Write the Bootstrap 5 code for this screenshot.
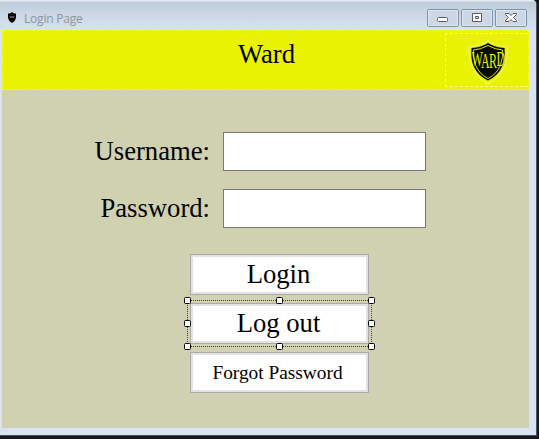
<!DOCTYPE html>
<html lang="en">
<head>
<meta charset="utf-8">
<title>Login Page</title>
<link href="https://cdn.jsdelivr.net/npm/bootstrap@5.3.0/dist/css/bootstrap.min.css" rel="stylesheet">
<style>
body{background:#17171f;overflow:hidden;font-family:"Liberation Serif","Times New Roman",serif;color:#000}
.app-window{width:537px;height:436px;background:#d8e4f1;border-top-right-radius:5px;border-right:1px solid #4b5562;border-bottom:1px solid #4b5562;padding:0 7px 7px 2px}
.title-bar{height:30px;margin:0 -7px 0 -2px;padding:0 9px 0 7px;background:linear-gradient(#e4ecf4 0,#e4ecf4 1px,#bfcddb 2px,#c8d5e3 12px,#d6e2ef 30px);border-top-right-radius:4px}
.title-text{font:12px/14px "Open Sans","Noto Sans",sans-serif;letter-spacing:-.2px;color:#8e969f;margin:7px 0 0 7px}
.win-controls{margin-top:9px}
.client{height:398px;background:#d0d1b1}
.banner{height:60px;background:#e9f200;border:1px dashed #f0f540}
.banner-title{font-size:26.67px;line-height:30px;margin:8px 0 0 235px}
.logo-box{width:83px;height:54px;margin:2px 0 0 auto;border:1px dashed #f6f98c;border-right:0}
.field-row{height:39px;gap:13px}
.field-row label{width:208px;font-size:26.67px;line-height:39px}
.field-row .form-control{width:203px;height:39px;border:1px solid #777870;padding:0 6px}
.login-form{padding-top:42px}
.field-list{gap:18px}
.action-list{margin:26px 0 0 188px}
.action{width:179px;height:41px;border:1px solid #aaa;box-shadow:inset 0 0 0 2px #e2e2e2;font-size:26.67px;line-height:39px;background:#fff}
.action-text{display:inline-block;margin-left:-2px}
.action-small{font-size:19.35px}
.action-small .action-text{margin-left:-4px}
.selection{left:-4px;top:-5px;overflow:visible}
</style>
<script src="https://cdn.jsdelivr.net/npm/bootstrap@5.3.0/dist/js/bootstrap.bundle.min.js"></script>
</head>
<body>
<div class="app-window">
  <div class="title-bar d-flex align-items-start">
    <svg class="mt-2 pt-1" width="10" height="18" viewBox="0 0 10 14"><path d="M5 0Q7 2 9 1.500V6Q8.500 9 5 11Q1.500 9 1 6V1.500Q3 2 5 0Z" fill="#080808"/><path d="M3 4l1 2 1-2 1 2 1-2" stroke="#92979b" stroke-width=".6" fill="none"/></svg>
    <div class="title-text align-self-center">Login Page</div>
    <div class="win-controls d-flex ms-auto">
      <svg width="100" height="18" viewBox="0 0 100 18">
        <g fill="#ccd7e3" stroke="#8292ac"><rect x=".5" y=".5" width="31" height="17" rx="1.500"/><rect x="34.500" y=".5" width="31" height="17" rx="1.500"/><rect x="68.500" y=".5" width="31" height="17" rx="1.500"/></g>
        <g fill="none" stroke="#dde6ef"><path d="M1.500 16.500V1.500H30.500V16.500ZM35.500 16.500V1.500H64.500V16.500ZM69.500 16.500V1.500H98.500V16.500Z"/></g>
        <rect x="10.500" y="8.500" width="10" height="4" rx="1" fill="#fff" stroke="#565b67"/>
        <path d="M45.500 4.500h9v8h-9zM48.500 7.500h3v2h-3z" fill="#fff" fill-rule="evenodd" stroke="#565b67" stroke-linejoin="round"/>
        <path d="M78.500 4.500h3.500l2 2 2-2h3.500v1L86.500 8.500l3 3v1H86l-2-2-2 2h-3.500v-1l3-3-3-3z" fill="#fff" stroke="#565b67" stroke-linejoin="round"/>
      </svg>
    </div>
  </div>
  <main class="client">
    <header class="banner d-flex">
      <div class="banner-title">Ward</div>
      <div class="logo-box">
        <svg class="d-block" width="82" height="53" viewBox="0 0 82 53">
          <path d="M42 6.500Q50 12 61.500 12.500Q62 39 42 50Q22 39 22.500 12.500Q34 12 42 6.500Z" fill="none" stroke="#eef356" stroke-width="1.500"/>
          <path d="M42 9Q49 13.500 58.500 14Q59.500 24 56.500 32Q52 42 42 46.500Q32 42 27.500 32Q24.500 24 25.500 14Q35 13.500 42 9Z" fill="#080a00"/>
          <path d="M42 11.500Q49 15.500 56.500 16Q57 24 54.500 31Q51 40 42 44.500Q33 40 29.500 31Q27 24 27.500 16Q35 15.500 42 11.500Z" fill="none" stroke="#dbe500" stroke-width="1"/>
          <text transform="translate(25.500 32) scale(.6 1)" fill="#e9f200" stroke="#080a00" stroke-width=".4" paint-order="stroke" font-family="Liberation Serif,serif" font-size="20" textLength="56" lengthAdjust="spacing" dy="0 2 0 -2">WARD</text>
        </svg>
      </div>
    </header>
    <form class="login-form">
      <div class="field-list d-flex flex-column">
        <div class="field-row d-flex"><label class="text-end" for="user">Username:</label><input id="user" class="form-control rounded-0" type="text"></div>
        <div class="field-row d-flex"><label class="text-end" for="pass">Password:</label><input id="pass" class="form-control rounded-0" type="password"></div>
      </div>
      <div class="action-list d-flex flex-column gap-2">
        <button type="button" class="action p-0"><span class="action-text">Login</span></button>
        <div class="position-relative">
          <button type="button" class="action p-0 d-block"><span class="action-text">Log out</span></button>
          <svg class="selection position-absolute" width="188" height="52" viewBox="0 0 188 52">
            <g fill="none" stroke="#45453b" stroke-dasharray="1 1" shape-rendering="crispEdges"><path d="M1 2.500H186M1 48.500H186M1.500 3V49M185.500 3V49"/></g>
            <g fill="#fff" stroke="#000"><rect x="-1.500" y="-.5" width="6" height="6" rx="1"/><rect x="90.500" y="-.5" width="6" height="6" rx="1"/><rect x="182.500" y="-.5" width="6" height="6" rx="1"/><rect x="-1.500" y="22.500" width="6" height="6" rx="1"/><rect x="182.500" y="22.500" width="6" height="6" rx="1"/><rect x="-1.500" y="45.500" width="6" height="6" rx="1"/><rect x="90.500" y="45.500" width="6" height="6" rx="1"/><rect x="182.500" y="45.500" width="6" height="6" rx="1"/></g>
          </svg>
        </div>
        <button type="button" class="action action-small p-0"><span class="action-text">Forgot Password</span></button>
      </div>
    </form>
  </main>
</div>
</body>
</html>
